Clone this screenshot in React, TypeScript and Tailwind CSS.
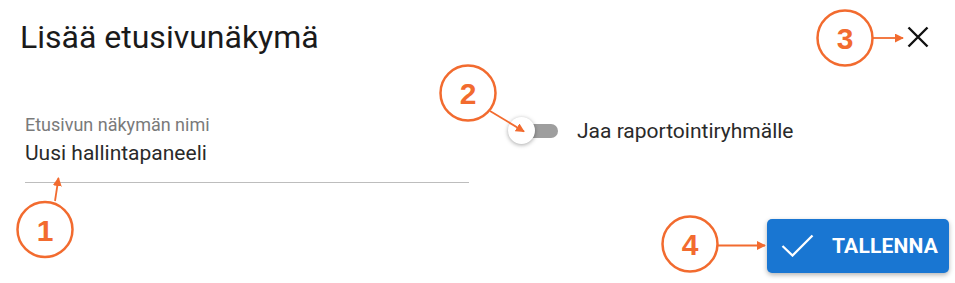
import React from 'react';

const ORANGE = '#f26b2f';

type Callout = { n: string; cx: number; cy: number; from: [number, number]; to: [number, number] };

const callouts: Callout[] = [
  { n: '1', cx: 45, cy: 229.5, from: [55, 201], to: [58.5, 178] },
  { n: '2', cx: 468, cy: 93, from: [490, 111], to: [524, 131.5] },
  { n: '3', cx: 845, cy: 38, from: [873, 38], to: [903, 38] },
  { n: '4', cx: 690, cy: 244, from: [718, 245.5], to: [765, 245.5] },
];

// orange numbered circles with arrows drawn over the dialog
const Annotations: React.FC = () => (
  <svg className="absolute inset-0 pointer-events-none" width={955} height={283} viewBox="0 0 955 283">
    <defs>
      <marker id="head" viewBox="0 0 10 10" refX="9" refY="5" markerWidth="5" markerHeight="5" orient="auto">
        <path d="M0 0 L10 5 L0 10 z" fill={ORANGE} />
      </marker>
    </defs>
    {callouts.map((c) => (
      <g key={c.n}>
        <circle cx={c.cx} cy={c.cy} r={27.5} fill="white" stroke={ORANGE} strokeWidth={2.5} />
        <text
          x={c.cx}
          y={c.cy + 11}
          textAnchor="middle"
          fill={ORANGE}
          fontFamily="'Liberation Sans', Arial, sans-serif"
          fontWeight={700}
          fontSize={30}
        >
          {c.n}
        </text>
        <line
          x1={c.from[0]}
          y1={c.from[1]}
          x2={c.to[0]}
          y2={c.to[1]}
          stroke={ORANGE}
          strokeWidth={1.8}
          markerEnd="url(#head)"
        />
      </g>
    ))}
  </svg>
);

export default function App() {
  return (
    <div className="relative w-[955px] h-[283px] bg-white overflow-hidden font-['Roboto',sans-serif]">
      {/* Header */}
      <div className="flex items-center justify-between mt-[18px] h-[38px] pl-[20px] pr-[26px]">
        <h2 className="text-[32px] leading-[38px] text-[#1a1a1a] font-normal">Lisää etusivunäkymä</h2>
        <button className="w-[22px] h-[22px] flex items-center justify-center">
          <svg width="22" height="22" viewBox="0 0 22 22">
            <path d="M1.5 1.5 L20.5 20.5 M20.5 1.5 L1.5 20.5" stroke="#111" strokeWidth={2.4} />
          </svg>
        </button>
      </div>

      {/* Content */}
      <div className="flex items-start mt-[58px]">
        <div className="ml-[25px] w-[444px] border-b border-[#bdbdbd] pb-[16px]">
          <div className="text-[18px] leading-[22px] text-[#7a7a7a]">Etusivun näkymän nimi</div>
          <div className="mt-[3.5px] text-[21px] leading-[26px] text-[#2a2a2a]">Uusi hallintapaneeli</div>
        </div>

        <div className="flex items-center ml-[39px] mt-[3px] h-[27px]">
          <div className="relative w-[50px] h-[27px]">
            <div className="absolute left-[6px] top-[6.5px] w-[44px] h-[14px] rounded-full bg-[#9e9e9e]" />
            <div className="absolute left-0 top-0 w-[27px] h-[27px] rounded-full bg-white shadow-[0_1px_4px_rgba(0,0,0,0.35)]" />
          </div>
          <span className="ml-[19px] text-[21px] leading-[26px] text-[#2a2a2a]">Jaa raportointiryhmälle</span>
        </div>
      </div>

      {/* Footer */}
      <div className="flex justify-end pr-[6px] mt-[36px]">
        <button className="flex items-center h-[54px] w-[182px] pl-[14px] rounded-[5px] bg-[#1976d2] text-white shadow-[0_2px_5px_rgba(0,0,0,0.3)]">
          <svg width="33" height="23" viewBox="0 0 33 23">
            <path d="M1.5 12 L11.5 21.5 L31.5 1.5" fill="none" stroke="white" strokeWidth={2.3} />
          </svg>
          <span className="ml-[18px] text-[21px] leading-[26px] font-bold tracking-[0.2px]">TALLENNA</span>
        </button>
      </div>

      <Annotations />
    </div>
  );
}
